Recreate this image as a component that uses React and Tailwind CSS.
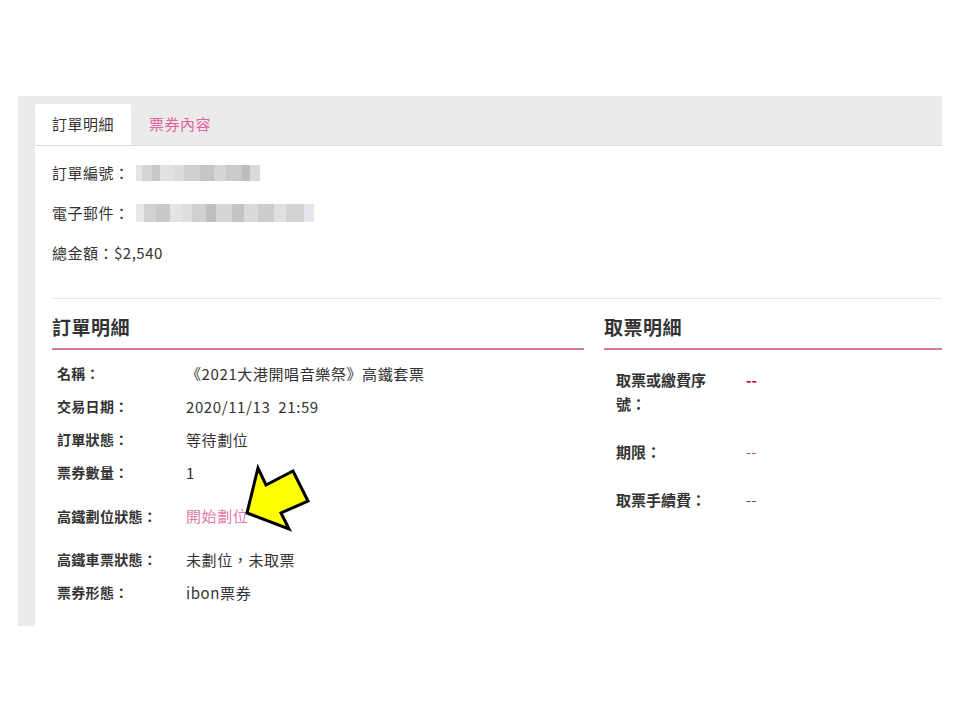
import React from 'react';

const FONT = { fontFamily: '"Noto Sans CJK TC", "Noto Sans", sans-serif' };

// Pixelated placeholder for redacted values
const Blur = ({ blocks, height }) => (
  <span className="inline-flex items-stretch ml-[6px]" style={{ height }}>
    {blocks.map(([w, c], i) => (
      <span key={i} style={{ width: w, background: c }} />
    ))}
  </span>
);

const orderBlocks = [
  [6, '#e6e6e6'], [10, '#d4d4d4'], [8, '#c8c8c8'], [14, '#e2e2e2'], [10, '#dcdcdc'],
  [16, '#cfcfcf'], [14, '#c6c6c6'], [12, '#d6d6d6'], [16, '#cbcbcb'], [8, '#bdbdbd'], [10, '#d9d9d9'],
];
const mailBlocks = [
  [8, '#e8e8e8'], [12, '#d2d2d2'], [14, '#c9c9c9'], [12, '#e4e4e4'], [10, '#dedede'],
  [14, '#d0d0d0'], [10, '#bfbfbf'], [16, '#d6d6d6'], [12, '#c4c4c4'], [14, '#dadada'],
  [16, '#cdcdcd'], [12, '#e0e0e0'], [18, '#d3d3d3'], [10, '#e6e6ee'],
];

const leftRows = [
  { label: '名稱：', value: '《2021大港開唱音樂祭》高鐵套票' },
  { label: '交易日期：', value: '2020/11/13\u00a0\u00a021:59' },
  { label: '訂單狀態：', value: '等待劃位' },
  { label: '票券數量：', value: '1' },
  { label: '高鐵劃位狀態：', value: '開始劃位', pink: true, tall: true },
  { label: '高鐵車票狀態：', value: '未劃位，未取票' },
  { label: '票券形態：', value: 'ibon票券' },
];

// Yellow callout arrow pointing at the seat booking link
const Arrow = () => (
  <svg className="absolute left-[54px] top-[-45px] pointer-events-none" width="75" height="75" viewBox="240 462 75 75">
    <polygon
      points="247,514 258,469 266,486 293,472 308,502 281,514 289,530"
      fill="#ffff00"
      stroke="#000"
      strokeWidth="3"
      strokeLinejoin="miter"
    />
  </svg>
);

export default function App() {
  return (
    <div className="min-h-[720px] bg-white pt-[96px] px-[18px] text-[#333]" style={FONT}>
      <div className="bg-[#ebebeb] pl-[17px]">
        {/* Tabs */}
        <div className="h-[50px] flex items-end border-b border-[#dcdcdc]">
          <div className="h-[41px] w-[96px] bg-white rounded-t-[3px] flex items-center justify-center text-[15px] tracking-[0.5px] text-[#333]">
            訂單明細
          </div>
          <div className="h-[41px] px-[18px] flex items-center text-[15px] tracking-[0.5px] text-[#e1619c]">
            票券內容
          </div>
        </div>

        <div className="bg-white pl-[17px] pb-[17px]">
          {/* Summary */}
          <div className="pt-[7px] text-[15px] tracking-[0.5px]">
            <div className="h-[40px] flex items-center">
              訂單編號：<Blur blocks={orderBlocks} height={16} />
            </div>
            <div className="h-[40px] flex items-center">
              電子郵件：<Blur blocks={mailBlocks} height={18} />
            </div>
            <div className="h-[40px] flex items-center">總金額：$2,540</div>
          </div>

          <div className="mt-[25px] border-t border-[#e6e6e6]" />

          <div className="flex gap-[20px] pt-[14px]">
            {/* Order details */}
            <div className="w-[532px]">
              <h2 className="text-[19px] font-bold leading-[28px] pb-[7px] border-b-2 border-[#d27a9f] tracking-[0.5px]">
                訂單明細
              </h2>
              <div className="pt-[7px] pl-[5px]">
                {leftRows.map((r) => (
                  <div key={r.label} className={`flex items-center ${r.tall ? 'h-[54px]' : 'h-[33px]'}`}>
                    <div className="w-[129px] text-[14px] font-bold tracking-[0.3px]">{r.label}</div>
                    <div className={`relative text-[15px] leading-[20px] tracking-[0.6px] ${r.pink ? 'text-[#e27aa8]' : 'text-[#333]'}`}>
                      {r.value}
                      {r.pink && <Arrow />}
                    </div>
                  </div>
                ))}
              </div>
            </div>

            {/* Pickup details */}
            <div className="flex-1">
              <h2 className="text-[19px] font-bold leading-[28px] pb-[7px] border-b-2 border-[#d27a9f] tracking-[0.5px]">
                取票明細
              </h2>
              <div className="pt-[18px] pl-[12px] text-[15px] leading-[24px] flex flex-col gap-[24px]">
                <div className="flex">
                  <div className="w-[130px]">
                    <div className="w-[100px] font-bold">取票或繳費序號：</div>
                  </div>
                  <div className="font-bold text-[#c4003c]">--</div>
                </div>
                <div className="flex">
                  <div className="w-[130px] font-bold">期限：</div>
                  <div className="text-[#e0507a]">--</div>
                </div>
                <div className="flex">
                  <div className="w-[130px] font-bold">取票手續費：</div>
                  <div className="text-[#555]">--</div>
                </div>
              </div>
            </div>
          </div>
        </div>
      </div>
    </div>
  );
}
